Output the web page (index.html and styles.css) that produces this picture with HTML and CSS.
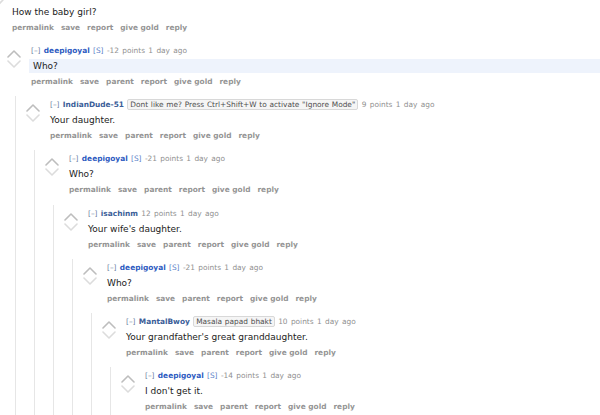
FILE: index.html
```html
<!DOCTYPE html>
<html>
<head>
<meta charset="utf-8">
<link rel="stylesheet" href="styles.css">
</head>
<body>
<div class="comment root">
  <div class="row">
    <div class="midcol"><svg class="arrows" viewBox="0 0 14 20"><polyline class="up" points="1,8 7,2 13,8"/><polyline class="down" points="1,12 7,18 13,12"/></svg></div>
    <div class="entry">
      <div class="md">How the baby girl?</div>
      <ul class="buttons"><li>permalink</li><li>save</li><li>report</li><li>give gold</li><li>reply</li></ul>
    </div>
  </div>
  <div class="child">
    <div class="comment">
      <div class="row">
        <div class="midcol"><svg class="arrows" viewBox="0 0 14 20"><polyline class="up" points="1,8 7,2 13,8"/><polyline class="down" points="1,12 7,18 13,12"/></svg></div>
        <div class="entry">
          <p class="tagline"><span class="expand">[–]</span> <span class="author sub">deepigoyal</span> <span class="s">[S]</span> <span class="score">-12 points 1 day ago</span></p>
          <div class="md new">Who?</div>
          <ul class="buttons"><li>permalink</li><li>save</li><li>parent</li><li>report</li><li>give gold</li><li>reply</li></ul>
        </div>
      </div>
      <div class="child">
        <div class="comment">
          <div class="row">
            <div class="midcol"><svg class="arrows" viewBox="0 0 14 20"><polyline class="up" points="1,8 7,2 13,8"/><polyline class="down" points="1,12 7,18 13,12"/></svg></div>
            <div class="entry">
              <p class="tagline"><span class="expand">[–]</span> <span class="author">IndianDude-51</span> <span class="flair">Dont like me? Press Ctrl+Shift+W to activate "Ignore Mode"</span> <span class="score">9 points 1 day ago</span></p>
              <div class="md">Your daughter.</div>
              <ul class="buttons"><li>permalink</li><li>save</li><li>parent</li><li>report</li><li>give gold</li><li>reply</li></ul>
            </div>
          </div>
          <div class="child">
            <div class="comment">
              <div class="row">
                <div class="midcol"><svg class="arrows" viewBox="0 0 14 20"><polyline class="up" points="1,8 7,2 13,8"/><polyline class="down" points="1,12 7,18 13,12"/></svg></div>
                <div class="entry">
                  <p class="tagline"><span class="expand">[–]</span> <span class="author sub">deepigoyal</span> <span class="s">[S]</span> <span class="score">-21 points 1 day ago</span></p>
                  <div class="md">Who?</div>
                  <ul class="buttons"><li>permalink</li><li>save</li><li>parent</li><li>report</li><li>give gold</li><li>reply</li></ul>
                </div>
              </div>
              <div class="child">
                <div class="comment">
                  <div class="row">
                    <div class="midcol"><svg class="arrows" viewBox="0 0 14 20"><polyline class="up" points="1,8 7,2 13,8"/><polyline class="down" points="1,12 7,18 13,12"/></svg></div>
                    <div class="entry">
                      <p class="tagline"><span class="expand">[–]</span> <span class="author">isachinm</span> <span class="score">12 points 1 day ago</span></p>
                      <div class="md">Your wife's daughter.</div>
                      <ul class="buttons"><li>permalink</li><li>save</li><li>parent</li><li>report</li><li>give gold</li><li>reply</li></ul>
                    </div>
                  </div>
                  <div class="child">
                    <div class="comment">
                      <div class="row">
                        <div class="midcol"><svg class="arrows" viewBox="0 0 14 20"><polyline class="up" points="1,8 7,2 13,8"/><polyline class="down" points="1,12 7,18 13,12"/></svg></div>
                        <div class="entry">
                          <p class="tagline"><span class="expand">[–]</span> <span class="author sub">deepigoyal</span> <span class="s">[S]</span> <span class="score">-21 points 1 day ago</span></p>
                          <div class="md">Who?</div>
                          <ul class="buttons"><li>permalink</li><li>save</li><li>parent</li><li>report</li><li>give gold</li><li>reply</li></ul>
                        </div>
                      </div>
                      <div class="child">
                        <div class="comment">
                          <div class="row">
                            <div class="midcol"><svg class="arrows" viewBox="0 0 14 20"><polyline class="up" points="1,8 7,2 13,8"/><polyline class="down" points="1,12 7,18 13,12"/></svg></div>
                            <div class="entry">
                              <p class="tagline"><span class="expand">[–]</span> <span class="author">MantalBwoy</span> <span class="flair">Masala papad bhakt</span> <span class="score">10 points 1 day ago</span></p>
                              <div class="md">Your grandfather's great granddaughter.</div>
                              <ul class="buttons"><li>permalink</li><li>save</li><li>parent</li><li>report</li><li>give gold</li><li>reply</li></ul>
                            </div>
                          </div>
                          <div class="child">
                            <div class="comment">
                              <div class="row">
                                <div class="midcol"><svg class="arrows" viewBox="0 0 14 20"><polyline class="up" points="1,8 7,2 13,8"/><polyline class="down" points="1,12 7,18 13,12"/></svg></div>
                                <div class="entry">
                                  <p class="tagline"><span class="expand">[–]</span> <span class="author sub">deepigoyal</span> <span class="s">[S]</span> <span class="score">-14 points 1 day ago</span></p>
                                  <div class="md">I don't get it.</div>
                                  <ul class="buttons"><li>permalink</li><li>save</li><li>parent</li><li>report</li><li>give gold</li><li>reply</li></ul>
                                </div>
                              </div>
                            </div>
                          </div>
                        </div>
                      </div>
                    </div>
                  </div>
                </div>
              </div>
            </div>
          </div>
        </div>
      </div>
    </div>
  </div>
</div>
</body>
</html>
```

FILE: styles.css
```css
html, body {
  margin: 0;
  padding: 0;
  background: #fff;
  overflow: hidden;
}
body {
  font-family: "DejaVu Sans", Verdana, sans-serif;
  color: #222;
  width: 600px;
  height: 415px;
}
.comment {
  padding: 3px 0 0 10px;
}
.root {
  margin-left: -22px;
  padding-top: 4px;
}
.row {
  display: flex;
}
.midcol {
  flex: none;
  width: 14px;
  margin-right: 10px;
}
.arrows {
  display: block;
  width: 14px;
  height: 20px;
  margin-top: 4px;
}
.root > .row .arrows {
  margin-top: -16px;
  margin-left: 2px;
}
.arrows polyline {
  fill: none;
  stroke-width: 1.6;
  stroke-linecap: round;
  stroke-linejoin: round;
}
.arrows .up {
  stroke: #bdbdbd;
}
.arrows .down {
  stroke: #dcdcdc;
}
.entry {
  flex: 1;
  min-width: 0;
  padding-bottom: 8.2px;
}
.root > .row > .entry {
  padding-bottom: 8px;
}
.tagline {
  margin: 0;
  font-size: 7.4px;
  line-height: 12px;
  height: 12px;
  color: #8f8f8f;
  white-space: nowrap;
  word-spacing: 1px;
}
.expand {
  color: #6a7fa3;
}
.author {
  font-weight: bold;
  color: #3a5d98;
}
.author.sub {
  color: #2c59c0;
}
.s {
  color: #5a7fc8;
}
.flair {
  display: inline-block;
  line-height: 9px;
  padding: 0 2px;
  background: #f5f5f5;
  border: 1px solid #d8d8d8;
  border-radius: 2px;
  color: #4e4e4e;
  word-spacing: 0.4px;
}
.md {
  font-size: 9px;
  line-height: 14px;
  margin-top: 2px;
  white-space: nowrap;
}
.root > .row .md {
  margin-top: 1px;
}
.root > .row .buttons {
  margin-top: 3px;
}
.md.new {
  background: #eef3fc;
  margin-left: -2px;
  padding-left: 4px;
}
.buttons {
  list-style: none;
  margin: 3px 0 0;
  padding: 0;
  display: flex;
  gap: 7px;
  font-size: 7.4px;
  font-weight: bold;
  line-height: 12px;
  color: #949494;
  white-space: nowrap;
}
.child {
  margin-left: 8px;
  border-left: 1px solid #e6e6e6;
}
```
